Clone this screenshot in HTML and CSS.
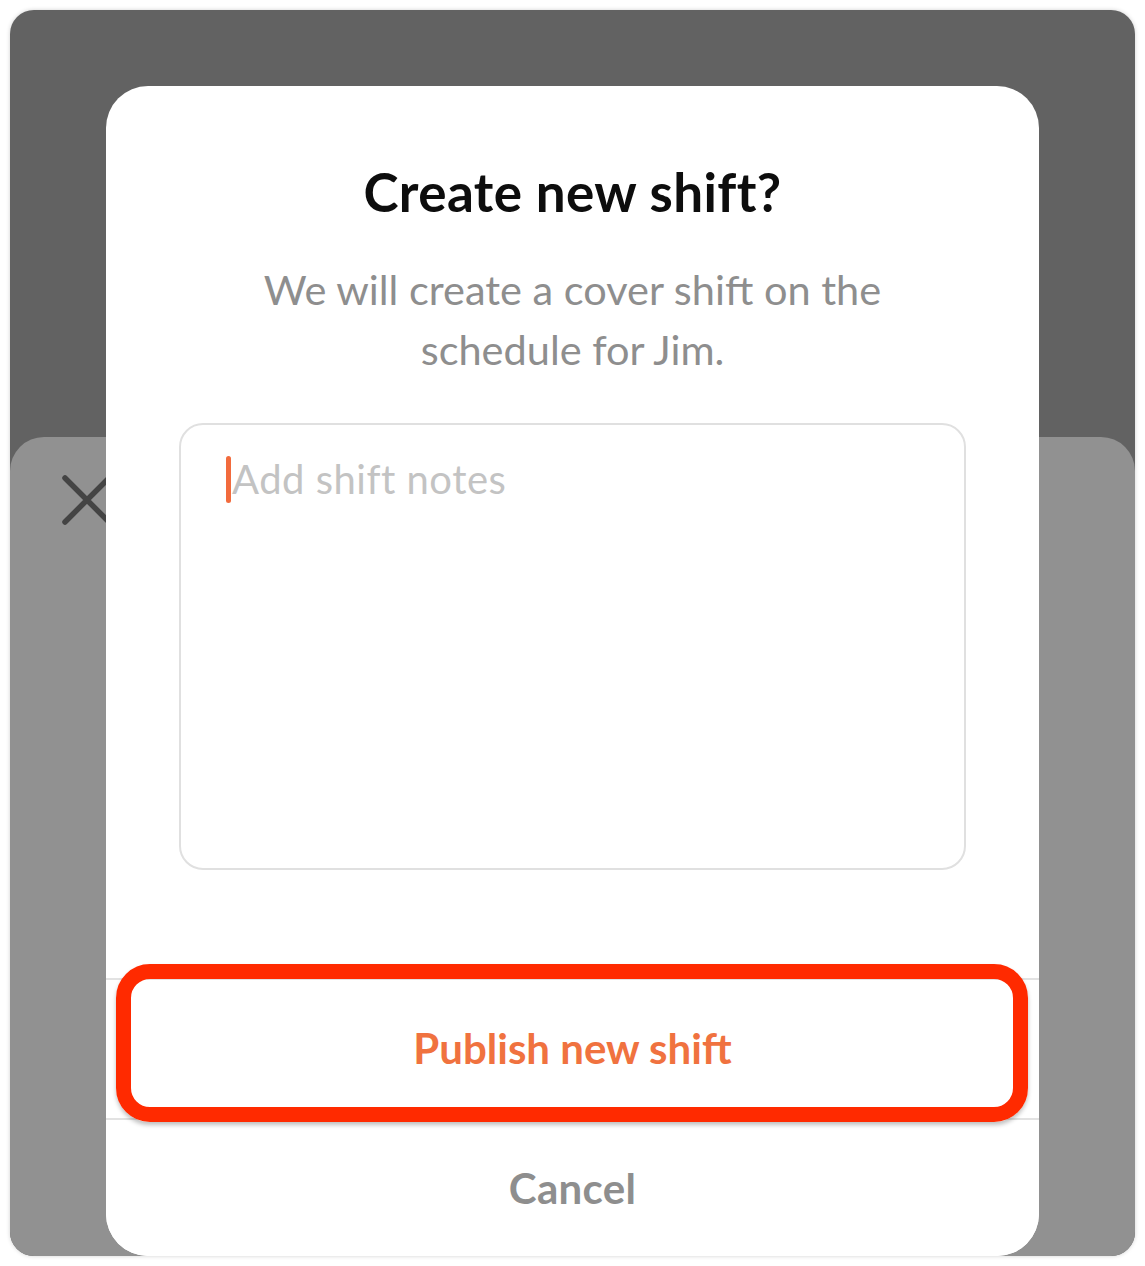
FILE: index.html
```html
<!DOCTYPE html>
<html lang="en">
<head>
    <meta charset="UTF-8">
    <meta name="viewport" content="width=device-width, initial-scale=1.0">
    <title>Create new shift</title>
    <link rel="stylesheet" href="styles.css">
</head>
<body>
    <div class="screen">
        <div class="sheet">
            <svg class="close-icon" width="50" height="50" viewBox="0 0 50 50">
                <path d="M3 3 L47 47 M47 3 L3 47" stroke="#444" stroke-width="5.5" stroke-linecap="round" fill="none"/>
            </svg>
        </div>

        <div class="modal">
            <h2 class="modal-title">Create new shift?</h2>
            <p class="modal-text">We will create a cover shift on the schedule for Jim.</p>

            <div class="notes">
                <span class="caret"></span>
                <span class="placeholder">Add shift notes</span>
            </div>

            <div class="actions">
                <button class="action publish">Publish new shift</button>
                <button class="action cancel">Cancel</button>
            </div>
        </div>

        <div class="highlight"></div>
    </div>
</body>
</html>
```

FILE: styles.css
```css
body {
    margin: 0;
    background: #fff;
    font-family: Lato, "Open Sans", sans-serif;
}
.screen {
    position: relative;
    margin: 10px;
    width: 1125px;
    height: 1246px;
    background: #626262;
    border-radius: 24px;
    overflow: hidden;
    box-shadow: 0 0 4px rgba(0, 0, 0, 0.18);
    display: flex;
    flex-direction: column;
    padding-top: 427px;
    box-sizing: border-box;
}
.sheet {
    flex: 1;
    background: #919191;
    border-radius: 34px 34px 0 0;
    padding: 38px 0 0 52px;
}
.close-icon {
    display: block;
}
.modal {
    position: absolute;
    left: 96px;
    top: 76px;
    width: 933px;
    bottom: 0;
    background: #fff;
    border-radius: 42px;
    display: flex;
    flex-direction: column;
    align-items: center;
}
.modal-title {
    margin: 76px 0 0;
    font-size: 53px;
    line-height: 60px;
    font-weight: 700;
    color: #0d0d0d;
    letter-spacing: 0.4px;
}
.modal-text {
    margin: 37px 0 0;
    width: 660px;
    text-align: center;
    font-size: 41.5px;
    line-height: 60px;
    color: #8e8e8e;
}
.notes {
    margin-top: 44px;
    width: 787px;
    height: 447px;
    box-sizing: border-box;
    border: 2px solid #e0e0e0;
    border-radius: 24px;
    padding: 31px 0 0 45px;
    display: flex;
    align-items: flex-start;
}
.caret {
    width: 5px;
    height: 47px;
    border-radius: 3px;
    background: #f26b3d;
}
.placeholder {
    font-size: 40px;
    line-height: 46px;
    color: #c3c3c3;
    letter-spacing: 0.5px;
    margin-left: 1px;
}
.actions {
    margin-top: auto;
    width: 100%;
    display: flex;
    flex-direction: column;
}
.action {
    display: block;
    width: 100%;
    border: none;
    border-top: 2px solid #e2e2e2;
    background: #fff;
    font-family: inherit;
    font-size: 42px;
    font-weight: 700;
    letter-spacing: 0.3px;
    cursor: pointer;
}
.publish {
    height: 140px;
    padding-bottom: 4px;
    color: #f0723f;
    letter-spacing: 0;
}
.cancel {
    height: 138px;
    color: #8e8e8e;
    border-radius: 0 0 42px 42px;
}
.highlight {
    position: absolute;
    left: 106px;
    top: 954px;
    width: 912px;
    height: 158px;
    box-sizing: border-box;
    border: 15px solid #ff2a00;
    border-radius: 34px;
    box-shadow: 0 3px 4px rgba(0, 0, 0, 0.25);
}
```
